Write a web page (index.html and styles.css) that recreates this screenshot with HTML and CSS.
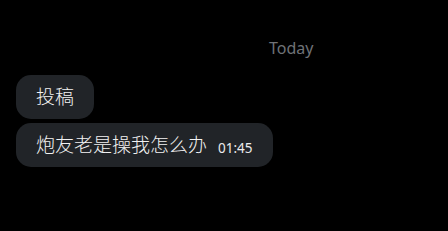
FILE: index.html
```html
<!DOCTYPE html>
<html lang="en">
<head>
    <meta charset="UTF-8">
    <meta name="viewport" content="width=device-width, initial-scale=1.0">
    <title>Chat</title>

    <link rel="stylesheet" href="styles.css">
</head>
<body>
    <div class="chat">
        <div class="day">Today</div>
        <div class="messages">
            <div class="bubble">
                <span class="text">投稿</span>
            </div>
            <div class="bubble">
                <span class="text">炮友老是操我怎么办</span>
                <span class="time">01:45</span>
            </div>
        </div>
    </div>
</body>
</html>
```

FILE: styles.css
```css
* {
    box-sizing: border-box;
}
body {
    margin: 0;
    background-color: #000;
    font-family: "Noto Sans", "Noto Sans CJK SC", sans-serif;
}
.chat {
    display: flex;
    flex-direction: column;
    padding: 38px 16px 0 16px;
    height: 231px;
}
.day {
    margin-left: 253px;
    font-size: 16px;
    line-height: 21px;
    color: #6f7277;
}
.messages {
    display: flex;
    flex-direction: column;
    align-items: flex-start;
    gap: 4px;
    margin-top: 16px;
    .bubble {
        display: flex;
        align-items: flex-end;
        gap: 11px;
        padding: 10px 20px;
        border-radius: 15px;
        background-color: #212428;
        color: #f2f2f2;
    }
    .text {
        font-size: 19px;
        font-weight: 300;
        line-height: 24px;
    }
    .time {
        font-size: 13.5px;
        line-height: 18px;
        color: #ececec;
    }
}
```
